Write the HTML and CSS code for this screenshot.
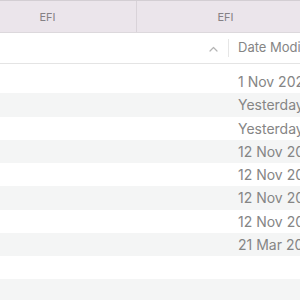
FILE: index.html
```html
<!DOCTYPE html>
<html lang="en">
<head>
    <meta charset="UTF-8">
    <meta name="viewport" content="width=device-width, initial-scale=1.0">
    <title>EFI</title>
    <link rel="stylesheet" href="styles.css">
</head>
<body>
    <div class="window">
        <div class="tabs">
            <div class="tab">EFI</div>
            <div class="tab">EFI</div>
        </div>
        <div class="list-header">
            <div class="col-name">
                <svg class="sort-caret" width="9" height="6" viewBox="0 0 9 6">
                    <path d="M1 5 L4.5 1.5 L8 5" fill="none" stroke="#b4b4b4" stroke-width="1.2" stroke-linecap="round" stroke-linejoin="round"/>
                </svg>
            </div>
            <div class="col-date">Date Modified</div>
        </div>
        <div class="rows">
            <div class="row"><span class="col-name"></span><span class="col-date">1 Nov 2023</span></div>
            <div class="row"><span class="col-name"></span><span class="col-date">Yesterday</span></div>
            <div class="row"><span class="col-name"></span><span class="col-date">Yesterday</span></div>
            <div class="row"><span class="col-name"></span><span class="col-date">12 Nov 2023</span></div>
            <div class="row"><span class="col-name"></span><span class="col-date">12 Nov 2023</span></div>
            <div class="row"><span class="col-name"></span><span class="col-date">12 Nov 2023</span></div>
            <div class="row"><span class="col-name"></span><span class="col-date">12 Nov 2023</span></div>
            <div class="row"><span class="col-name"></span><span class="col-date">21 Mar 2023</span></div>
            <div class="row"><span class="col-name"></span><span class="col-date"></span></div>
            <div class="row"><span class="col-name"></span><span class="col-date"></span></div>
        </div>
    </div>
</body>
</html>
```

FILE: styles.css
```css
body {
    margin: 0;
    font-family: Inter, "Liberation Sans", Arial, sans-serif;
    background-color: #ffffff;
    overflow: hidden;
}
.window {
    width: 300px;
    height: 300px;
    overflow: hidden;
}
.tabs {
    display: flex;
    height: 31px;
    margin-left: -41px;
    background-color: #ebe5eb;
    border-top: 1px solid #d3ced3;
    border-bottom: 1px solid #dcd8dc;
}
.tab {
    flex: 0 0 177px;
    display: flex;
    align-items: center;
    justify-content: center;
    font-size: 11px;
    color: #858185;
    border-right: 1px solid #d9d3d9;
}
.list-header {
    display: flex;
    align-items: center;
    height: 30px;
    border-bottom: 1px solid #e4e4e4;
}
.list-header .col-name {
    width: 228px;
    flex-shrink: 0;
    display: flex;
    justify-content: flex-end;
    padding-right: 10px;
    box-sizing: border-box;
}
.sort-caret {
    display: block;
    margin-top: 2px;
}
.list-header .col-date {
    flex-shrink: 0;
    height: 18px;
    line-height: 17px;
    padding-left: 9px;
    border-left: 1px solid #e6e6e6;
    font-size: 13px;
    color: #858585;
    white-space: nowrap;
}
.rows {
    padding-top: 6px;
}
.row {
    display: flex;
    align-items: center;
    height: 23.25px;
}
.row:nth-child(even) {
    background-color: #f4f5f5;
}
.row .col-name {
    width: 229px;
    flex-shrink: 0;
}
.row .col-date {
    flex-shrink: 0;
    padding-left: 9px;
    font-size: 14px;
    color: #858585;
    white-space: nowrap;
}
```
